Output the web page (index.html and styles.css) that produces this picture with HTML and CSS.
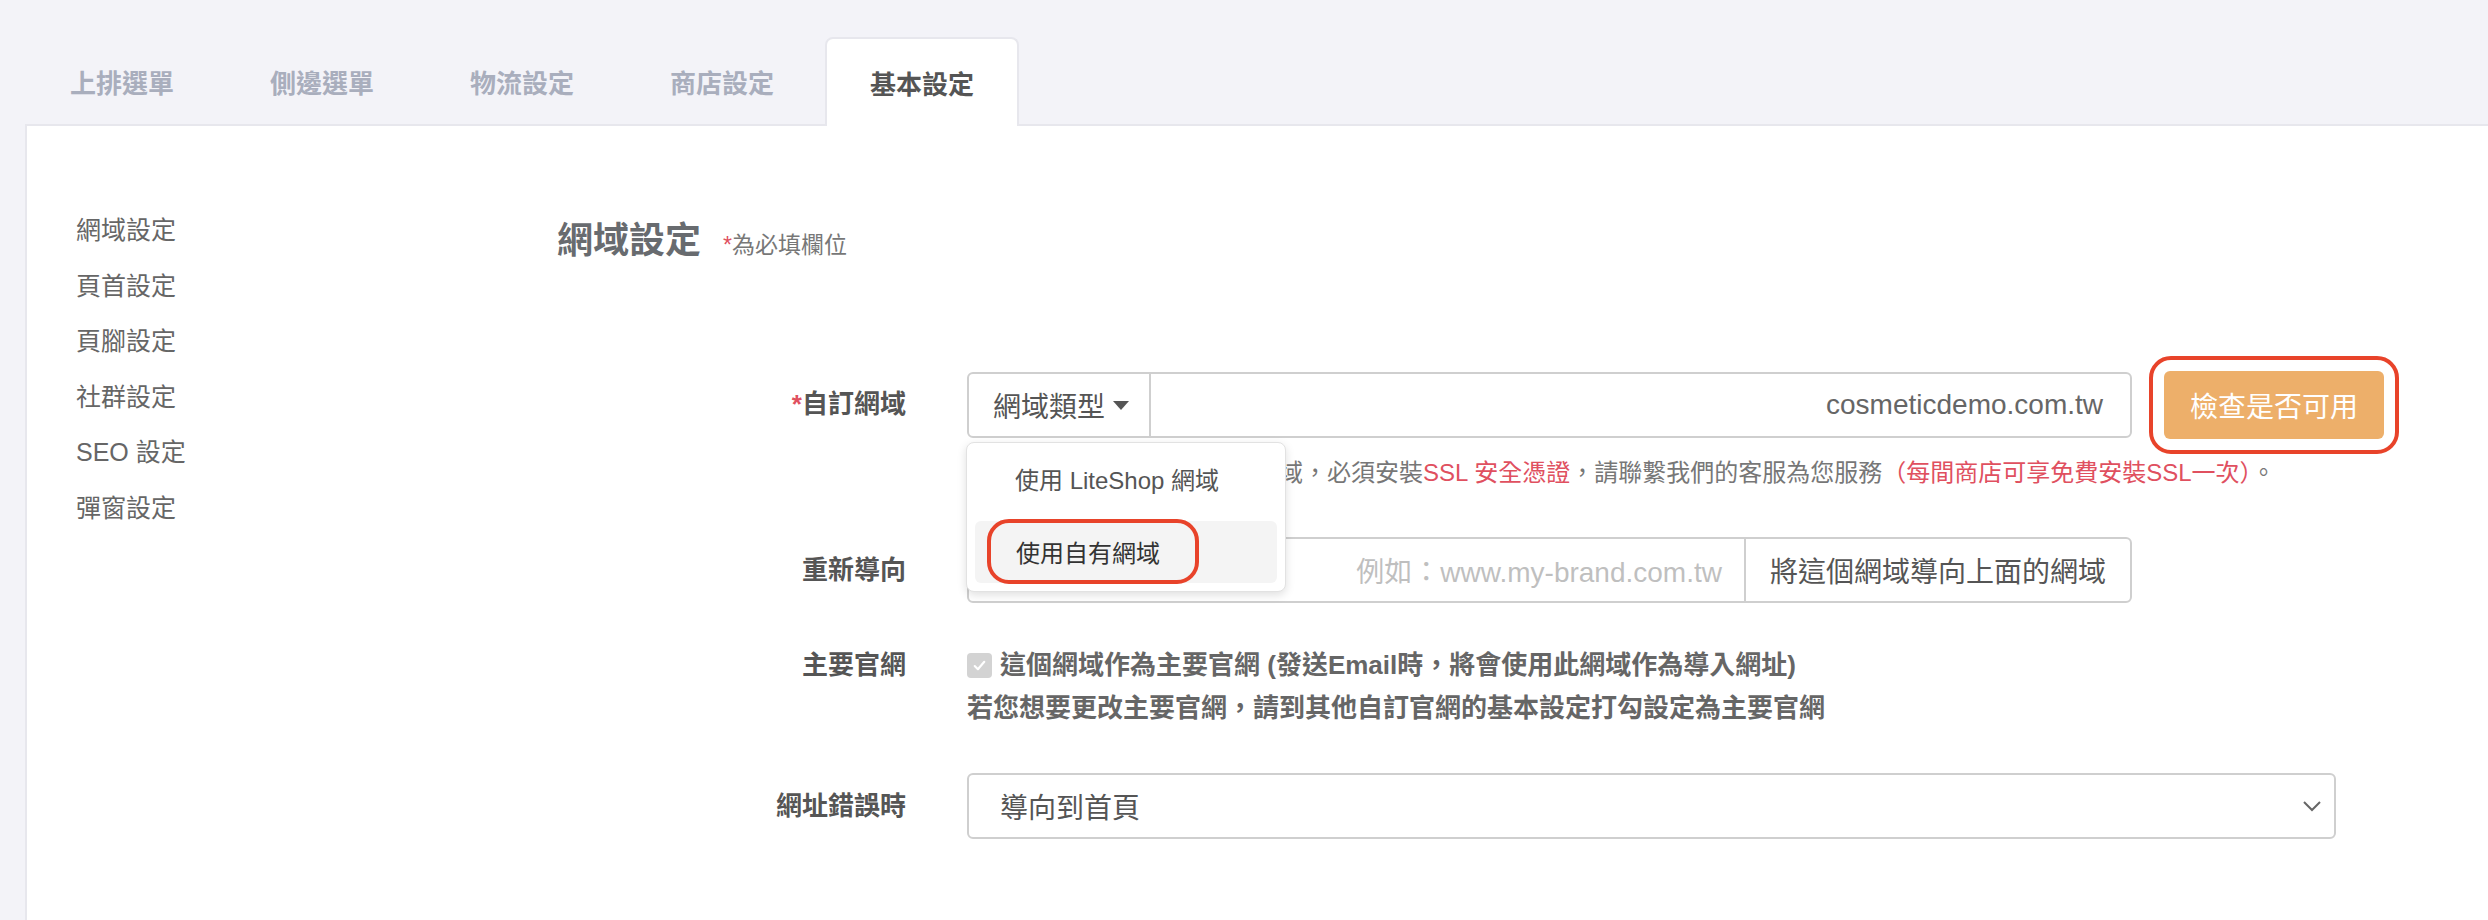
FILE: index.html
```html
<!DOCTYPE html>
<html lang="zh-Hant">
<head>
    <meta charset="UTF-8">
    <meta name="viewport" content="width=device-width, initial-scale=1.0">
    <title>基本設定 | 網域設定</title>
    <link rel="stylesheet" href="styles.css">
</head>
<body>

<div class="page">
    <nav class="tabs">
        <a class="tab">上排選單</a>
        <a class="tab">側邊選單</a>
        <a class="tab">物流設定</a>
        <a class="tab">商店設定</a>
        <a class="tab tab-active">基本設定</a>
    </nav>

    <div class="panel">
        <ul class="side-nav">
            <li>網域設定</li>
            <li>頁首設定</li>
            <li>頁腳設定</li>
            <li>社群設定</li>
            <li>SEO 設定</li>
            <li>彈窗設定</li>
        </ul>

        <div class="content">
            <div class="title-row">
                <h2>網域設定</h2>
                <span class="req-note"><em>*</em>為必填欄位</span>
            </div>

            <!-- custom domain -->
            <div class="form-row row-domain">
                <label class="form-label"><em>*</em>自訂網域</label>
                <div class="field">
                    <div class="field-line">
                        <div class="input-group">
                            <div class="addon addon-type">網域類型<span class="caret"></span></div>
                            <div class="input-value">cosmeticdemo.com.tw</div>

                            <div class="dropdown">
                                <div class="dropdown-item item-first">使用 LiteShop 網域</div>
                                <div class="dropdown-item item-hover">
                                    <span class="mark mark-item">使用自有網域</span>
                                </div>
                            </div>
                        </div>
                        <span class="mark mark-btn">
                            <button class="btn-check">檢查是否可用</button>
                        </span>
                    </div>
                    <p class="help">若您想要使用您自己擁有的網域，必須安裝<span class="red">SSL 安全憑證</span>，請聯繫我們的客服為您服務<span class="red">（每間商店可享免費安裝SSL一次）</span>。</p>
                </div>
            </div>

            <!-- redirect -->
            <div class="form-row row-redirect">
                <label class="form-label">重新導向</label>
                <div class="field">
                    <div class="input-group">
                        <div class="input-value placeholder">例如：www.my-brand.com.tw</div>
                        <div class="addon addon-redirect">將這個網域導向上面的網域</div>
                    </div>
                </div>
            </div>

            <!-- main site -->
            <div class="form-row row-main">
                <label class="form-label">主要官網</label>
                <div class="field main-text">
                    <div class="check-line">
                        <span class="checkbox">
                            <svg width="17" height="17" viewBox="0 0 16 16"><path d="M3.5 8.5l3 3 6-7" fill="none" stroke="#fff" stroke-width="2" stroke-linecap="round" stroke-linejoin="round"/></svg>
                        </span>
                        這個網域作為主要官網 (發送Email時，將會使用此網域作為導入網址)
                    </div>
                    <div>若您想要更改主要官網，請到其他自訂官網的基本設定打勾設定為主要官網</div>
                </div>
            </div>

            <!-- url error -->
            <div class="form-row row-error">
                <label class="form-label">網址錯誤時</label>
                <div class="field">
                    <div class="select">
                        <span>導向到首頁</span>
                        <svg width="20" height="12" viewBox="0 0 20 12"><path d="M2 2l8 8 8-8" fill="none" stroke="#666" stroke-width="2"/></svg>
                    </div>
                </div>
            </div>
        </div>
    </div>
</div>

</body>
</html>
```

FILE: styles.css
```css
body {
    margin: 0;
    background-color: #f3f3f8;
    font-family: "Liberation Sans", "Noto Sans CJK TC", sans-serif;
    color: #555;
}
.page {
    padding: 37px 0 0 25px;
}

/* top tabs */
.tabs {
    display: flex;
    gap: 6px;
}
.tab {
    width: 194px;
    height: 87px;
    box-sizing: border-box;
    display: flex;
    justify-content: center;
    align-items: center;
    font-size: 26px;
    font-weight: bold;
    color: #a9aebd;
    border: 2px solid transparent;
    border-bottom: none;
    border-radius: 8px 8px 0 0;
}
.tab-active {
    background-color: #fff;
    color: #555;
    border-color: #e7e7ed;
    margin-bottom: -2px;
    height: 89px;
    position: relative;
    z-index: 1;
}

/* panel */
.panel {
    display: flex;
    background-color: #fff;
    border-top: 2px solid #e7e7ed;
    border-left: 2px solid #e7e7ed;
    min-height: 800px;
}
.side-nav {
    list-style: none;
    margin: 0;
    padding: 77px 0 0 49px;
    width: 481px;
    flex-shrink: 0;
}
.side-nav li {
    font-size: 25px;
    line-height: 55.6px;
    color: #666;
}
.content {
    flex: 1;
    padding-top: 93px;
}

.title-row {
    display: flex;
    align-items: baseline;
    gap: 22px;
}
.title-row h2 {
    margin: 0;
    font-size: 36px;
    line-height: 44px;
    color: #686b6f;
}
.req-note {
    font-size: 23px;
    color: #777;
}
em {
    font-style: normal;
    color: #e0505f;
}

/* form */
.form-row {
    display: grid;
    grid-template-columns: 349px 1fr;
    column-gap: 61px;
}
.form-label {
    text-align: right;
    font-size: 26px;
    font-weight: bold;
    color: #555;
    line-height: 66px;
}
.row-domain {
    margin-top: 108px;
}
.row-redirect {
    margin-top: 49px;
}
.row-main {
    margin-top: 41px;
}
.row-main .form-label {
    line-height: 43px;
}
.row-error {
    margin-top: 43px;
}

.field-line {
    display: flex;
    align-items: center;
    gap: 32px;
}
.input-group {
    position: relative;
    display: flex;
    width: 1165px;
    height: 66px;
    box-sizing: border-box;
    border: 2px solid #cfcfcf;
    border-radius: 6px;
    font-size: 28px;
}
.addon {
    display: flex;
    align-items: center;
    color: #555;
    white-space: nowrap;
}
.addon-type {
    width: 182px;
    box-sizing: border-box;
    padding-left: 24px;
    border-right: 2px solid #cfcfcf;
}
.caret {
    margin-left: 8px;
    border-top: 9px solid #555;
    border-left: 8px solid transparent;
    border-right: 8px solid transparent;
}
.addon-redirect {
    padding: 0 24px;
    border-left: 2px solid #cfcfcf;
}
.input-value {
    flex: 1;
    display: flex;
    align-items: center;
    justify-content: flex-end;
    padding-right: 27px;
    color: #666;
}
.placeholder {
    color: #bfbfbf;
    padding-right: 22px;
}

/* dropdown menu */
.dropdown {
    position: absolute;
    top: calc(100% + 6px);
    left: -3px;
    width: 320px;
    box-sizing: border-box;
    padding: 8px;
    display: flex;
    flex-direction: column;
    gap: 8px;
    background-color: #fff;
    border: 1px solid #e2e2e2;
    border-radius: 8px;
    box-shadow: 0 3px 10px rgba(0, 0, 0, 0.13);
    z-index: 2;
    font-size: 24px;
}
.dropdown-item {
    height: 62px;
    display: flex;
    align-items: center;
    padding-left: 40px;
    color: #555;
    border-radius: 6px;
}
.item-first {
    padding-bottom: 8px;
    box-sizing: border-box;
}
.item-hover {
    background-color: #f4f4f4;
    padding-left: 12px;
    color: #333;
}

/* red annotation marks */
.mark {
    border: 4px solid #e8432a;
    border-radius: 22px;
}
.mark-item {
    height: 65px;
    width: 212px;
    box-sizing: border-box;
    padding-left: 25px;
    display: flex;
    align-items: center;
    margin-top: -2px;
}
.mark-btn {
    padding: 11px;
    margin: -15px;
    display: flex;
}
.btn-check {
    width: 220px;
    height: 68px;
    border: none;
    border-radius: 6px;
    background-color: #edaf6a;
    color: #fff;
    font-family: inherit;
    font-size: 28px;
    padding: 0;
}

.help {
    margin: 19px 0 0;
    font-size: 24px;
    line-height: 30px;
    color: #777;
}
.red {
    color: #e0505f;
}

/* main site */
.main-text {
    font-size: 26px;
    font-weight: bold;
    line-height: 43px;
    color: #666;
}
.check-line {
    display: flex;
    align-items: center;
    gap: 8px;
}
.checkbox {
    width: 25px;
    height: 25px;
    border-radius: 4px;
    background-color: #d3d3d3;
    display: flex;
    justify-content: center;
    align-items: center;
}

/* select */
.select {
    width: 1369px;
    height: 66px;
    box-sizing: border-box;
    border: 2px solid #cfcfcf;
    border-radius: 6px;
    display: flex;
    align-items: center;
    justify-content: space-between;
    padding: 0 12px 0 31px;
    font-size: 28px;
    color: #555;
}
```
